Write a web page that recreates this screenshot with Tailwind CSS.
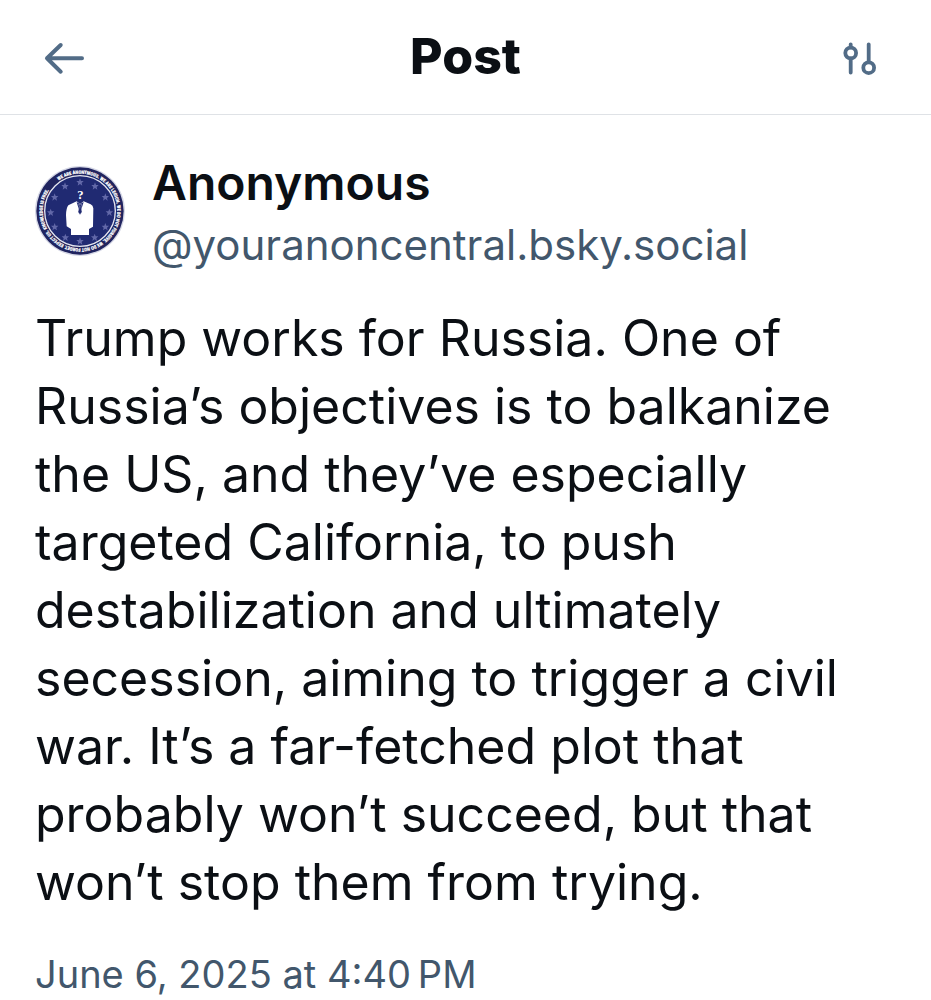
<!DOCTYPE html>
<html lang="en">
<head>
    <meta charset="UTF-8">
    <meta name="viewport" content="width=device-width, initial-scale=1.0">
    <script src="https://cdn.jsdelivr.net/npm/@tailwindcss/browser@4"></script>
    <title>Post</title>
</head>
<body class="bg-white text-[#0b0f14] font-['Inter',sans-serif]">
    <!-- Header -->
    <header class="grid grid-cols-[1fr_auto_1fr] items-center h-[115px] px-[35px] border-b border-[#dfe2e6]">
        <button type="button" aria-label="Back" class="justify-self-start p-2 text-[#526c87]">
            <svg class="w-10 h-10 overflow-visible" viewBox="0 0 40 40" fill="none" stroke="currentColor" stroke-width="4" stroke-linecap="round" stroke-linejoin="round">
                <path d="M39 21.3H4M17.7 8L4 21.3l13.7 13.4"/>
            </svg>
        </button>
        <h1 class="text-[50px] leading-[60px] font-extrabold pb-0.5">Post</h1>
        <button type="button" aria-label="Thread options" class="justify-self-end p-2 mr-2 text-[#526c87]">
            <svg class="w-10 h-10" viewBox="0 0 40 40" fill="none" stroke="currentColor" stroke-width="3.8" stroke-linecap="round">
                <path d="M10.7 7.3v3M10.7 21.5v14M28.7 7.3v17"/>
                <circle cx="10.7" cy="16" r="5.4"/>
                <circle cx="28.7" cy="30.7" r="5.4"/>
            </svg>
        </button>
    </header>

    <main class="px-[35px] pt-[37px]">
        <article>
            <!-- Author -->
            <div class="flex items-start gap-[27px]">
                <svg class="w-[90px] h-[90px] mt-[14px] shrink-0" viewBox="14 16 270 270" role="img" aria-label="Anonymous avatar">
                    <defs>
                        <path id="ring" d="M149 39a112 112 0 0 1 0 224a112 112 0 0 1 0 -224" transform="rotate(-35 149 151)"/>
                        <path id="star" d="M0 -12L3 -4L11 -4L5 2L7 10L0 5L-7 10L-5 2L-11 -4L-3 -4Z"/>
                    </defs>
                    <circle cx="149" cy="151" r="135" fill="#d5d7e5"/>
                    <circle cx="149" cy="151" r="131" fill="#20245f"/>
                    <circle cx="149" cy="151" r="106" fill="#202a72" stroke="#e4e5ef" stroke-width="4"/>
                    <text class="font-['Liberation_Sans_Narrow','Roboto_Condensed','Liberation_Sans',sans-serif] font-bold" font-size="14" fill="#ffffff" stroke="#ffffff" stroke-width="0.6"><textPath href="#ring">WE ARE ANONYMOUS. WE ARE LEGION. WE DO NOT FORGIVE. WE DO NOT FORGET. EXPECT US. KNOWLEDGE IS FREE.</textPath></text>
                    <g fill="#6268a8">
                        <use href="#star" x="149" y="65"/>
                        <use href="#star" x="194" y="77"/>
                        <use href="#star" x="225" y="110"/>
                        <use href="#star" x="237" y="156"/>
                        <use href="#star" x="225" y="199"/>
                        <use href="#star" x="193" y="231"/>
                        <use href="#star" x="149" y="242"/>
                        <use href="#star" x="105" y="231"/>
                        <use href="#star" x="73" y="199"/>
                        <use href="#star" x="61" y="156"/>
                        <use href="#star" x="73" y="110"/>
                        <use href="#star" x="104" y="77"/>
                    </g>
                    <path d="M139 122L114 134Q107 144 107 164L109 197L122 205V223H176V205L188 198L189 143Q188 134 181 131L160 122L149 130Z" fill="#fff"/>
                    <path d="M139 124L149 158L160 124L149 130Z" fill="#202a72"/>
                    <path d="M145 131h9l-2 7l3 16l-6 8l-6 -8l4 -16Z" fill="#202a72" stroke="#fff" stroke-width="1"/>
                    <text x="150" y="116" text-anchor="middle" class="font-['Liberation_Serif',serif] font-bold" font-size="38" fill="#fff">?</text>
                </svg>
                <div class="min-w-0">
                    <h2 class="text-[48px] leading-[62px] font-semibold">Anonymous</h2>
                    <a href="#" class="block text-[42px] leading-[62px] text-[#42576c]">@youranoncentral.bsky.social</a>
                </div>
            </div>

            <!-- Post text -->
            <p class="text-[50px] leading-[68px] mt-7">Trump works for Russia. One of Russia’s objectives is to balkanize the US, and they’ve especially targeted California, to push destabilization and ultimately secession, aiming to trigger a civil war. It’s a far-fetched plot that probably won’t succeed, but that won’t stop them from trying.</p>
            <time datetime="2025-06-06T16:40" class="block mt-8 text-[38px] leading-[52px] text-[#42576c]">June 6, 2025 at 4:40&#8239;PM</time>
        </article>
    </main>
</body>
</html>
